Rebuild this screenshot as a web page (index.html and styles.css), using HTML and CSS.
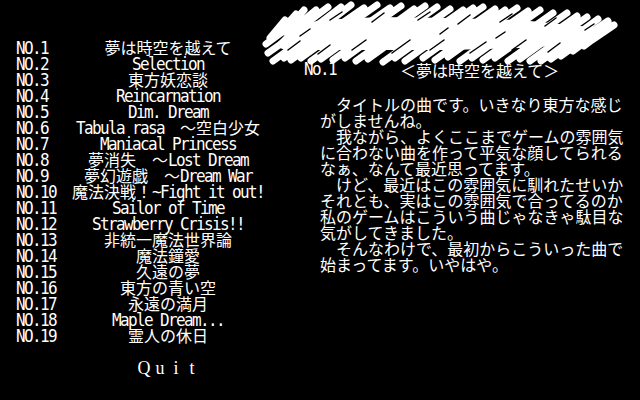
FILE: index.html
```html
<!DOCTYPE html>
<html lang="ja">
<head>
<meta charset="utf-8">
<title>Music Room</title>
<link rel="stylesheet" href="styles.css">
</head>
<body>
<div class="screen">
  <svg class="scribble" viewBox="0 0 640 70" width="640" height="70" aria-hidden="true">
    <polygon class="core" points="280,40 292,28 320,20 380,17 450,18 520,20 570,25 600,28 595,36 570,45 520,48 450,50 380,50 320,50 285,50 275,46"/>
    <path class="strokes" d="M270 38 L285 20 M278 34 L296 14 M285 32 L304 10 M292 30 L316 10 M300 28 L328 7 M315 27 L341 7 M325 25 L351 5 M338 26 L364 8 M350 24 L377 5 M364 26 L390 8 M374 25 L401 6 M388 28 L414 9 M398 25 L425 6 M410 26 L437 7 M423 28 L450 9 M436 29 L463 10 M446 27 L473 8 M456 26 L483 7 M468 28 L495 9 M478 29 L505 10 M490 27 L517 8 M501 30 L528 11 M513 29 L540 10 M526 32 L553 13 M540 32 L567 13 M550 35 L577 16 M560 36 L587 17 M572 38 L598 19 M582 39 L608 21 M592 40 L614 25
    M266 44 L285 30 M268 53 L292 36 M273 61 L298 43 M284 58 L309 40 M291 60 L316 42 M301 58 L326 40 M311 61 L336 43 M321 59 L346 41 M333 60 L358 42 M345 58 L370 40 M356 61 L381 43 M368 59 L393 41 M383 62 L408 44 M395 58 L420 40 M405 61 L430 43 M423 58 L448 40 M435 60 L460 42 M448 57 L473 39 M460 61 L485 43 M472 58 L497 40 M483 60 L508 42 M495 58 L520 40 M508 61 L533 43 M520 59 L545 41 M530 61 L555 43 M541 61 L566 43 M551 59 L576 41 M561 56 L586 38 M573 51 L596 34 M584 46 L604 31"/>
    <path class="gaps" d="M288 50 L300 41 M318 54 L330 45 M352 50 L366 40 M392 53 L410 40 M430 50 L444 40 M470 53 L486 42 M512 50 L526 40 M548 52 L560 43 M330 20 L342 12 M372 22 L384 13 M418 20 L430 12 M458 24 L470 15 M500 22 L512 14 M545 26 L556 18 M585 30 L594 24 M300 36 L310 29 M440 34 L448 28 M496 38 L505 32"/>
  </svg>

  <div class="menu">
    <ol class="list">
      <li class="row"><span class="no"><span class="h">NO.1</span></span><span class="title">夢は時空を越えて</span></li>
      <li class="row"><span class="no"><span class="h">NO.2</span></span><span class="title"><span class="h">Selection</span></span></li>
      <li class="row"><span class="no"><span class="h">NO.3</span></span><span class="title">東方妖恋談</span></li>
      <li class="row"><span class="no"><span class="h">NO.4</span></span><span class="title"><span class="h">Reincarnation</span></span></li>
      <li class="row"><span class="no"><span class="h">NO.5</span></span><span class="title"><span class="h">Dim. Dream</span></span></li>
      <li class="row"><span class="no"><span class="h">NO.6</span></span><span class="title"><span class="h">Tabula rasa</span>　～空白少女</span></li>
      <li class="row"><span class="no"><span class="h">NO.7</span></span><span class="title"><span class="h">Maniacal Princess</span></span></li>
      <li class="row"><span class="no"><span class="h">NO.8</span></span><span class="title">夢消失　～<span class="h">Lost Dream</span></span></li>
      <li class="row"><span class="no"><span class="h">NO.9</span></span><span class="title">夢幻遊戯　～<span class="h">Dream War</span></span></li>
      <li class="row"><span class="no"><span class="h">NO.10</span></span><span class="title">魔法決戦！<span class="h">~Fight it out!</span></span></li>
      <li class="row"><span class="no"><span class="h">NO.11</span></span><span class="title"><span class="h">Sailor of Time</span></span></li>
      <li class="row"><span class="no"><span class="h">NO.12</span></span><span class="title"><span class="h">Strawberry Crisis!!</span></span></li>
      <li class="row"><span class="no"><span class="h">NO.13</span></span><span class="title">非統一魔法世界論</span></li>
      <li class="row"><span class="no"><span class="h">NO.14</span></span><span class="title">魔法鐘愛</span></li>
      <li class="row"><span class="no"><span class="h">NO.15</span></span><span class="title">久遠の夢</span></li>
      <li class="row"><span class="no"><span class="h">NO.16</span></span><span class="title">東方の青い空</span></li>
      <li class="row"><span class="no"><span class="h">NO.17</span></span><span class="title">永遠の満月</span></li>
      <li class="row"><span class="no"><span class="h">NO.18</span></span><span class="title"><span class="h">Maple Dream...</span></span></li>
      <li class="row"><span class="no"><span class="h">NO.19</span></span><span class="title">霊人の休日</span></li>
    </ol>
    <div class="quit"><span>Q</span><span>u</span><span>i</span><span>t</span></div>
  </div>

  <div class="info">
    <div class="head"><span class="h">No.1</span><span class="name">＜夢は時空を越えて＞</span></div>
    <div class="comment">
      <div class="line">　タイトルの曲です。いきなり東方な感じ</div>
      <div class="line">がしませんね。</div>
      <div class="line">　我ながら、よくここまでゲームの雰囲気</div>
      <div class="line">に合わない曲を作って平気な顔してられる</div>
      <div class="line">なぁ、なんて最近思ってます。</div>
      <div class="line">　けど、最近はこの雰囲気に馴れたせいか</div>
      <div class="line">それとも、実はこの雰囲気で合ってるのか</div>
      <div class="line">私のゲームはこういう曲じゃなきゃ駄目な</div>
      <div class="line">気がしてきました。</div>
      <div class="line">　そんなわけで、最初からこういった曲で</div>
      <div class="line">始まってます。いやはや。</div>
    </div>
  </div>
</div>
</body>
</html>
```

FILE: styles.css
```css
html, body {
  margin: 0;
  padding: 0;
  background: #000;
}

body {
  color: #fff;
  font-family: "Noto Sans CJK JP", sans-serif;
  font-size: 16px;
  line-height: 16px;
}

.screen {
  position: relative;
  display: flex;
  width: 640px;
  height: 400px;
  overflow: hidden;
  background: #000;
}

.scribble {
  position: absolute;
  left: 0;
  top: 0;
}

.scribble .core {
  fill: #fff;
}

.scribble .strokes {
  fill: none;
  stroke: #fff;
  stroke-width: 7;
  stroke-linecap: round;
}

.scribble .gaps {
  fill: none;
  stroke: #000;
  stroke-width: 1.5;
  stroke-linecap: round;
}

.h {
  display: inline-block;
  font-family: "DejaVu Sans Mono", monospace;
  letter-spacing: -1.63px;
  transform: scaleY(1.1);
  transform-origin: 50% 84%;
}

.menu {
  width: 304px;
  margin-left: 16px;
  padding-top: 39px;
  flex: none;
}

.list {
  list-style: none;
  margin: 0;
  padding: 0;
}

.row {
  display: grid;
  grid-template-columns: 1fr;
  grid-template-rows: 16px;
  height: 16px;
  white-space: pre;
}

.row > .no,
.row > .title {
  grid-area: 1 / 1;
}

.no {
  justify-self: start;
}

.title {
  justify-self: center;
}

.quit {
  display: flex;
  justify-content: center;
  margin-top: 17px;
  height: 16px;
  font-family: "Liberation Serif", serif;
  font-size: 18px;
}

.quit span {
  display: block;
  width: 16px;
  text-align: center;
}

.info {
  flex: 1;
  padding-top: 62px;
}

.head {
  display: flex;
  height: 16px;
  margin-left: -16px;
  white-space: pre;
}

.head .name {
  margin-left: 64px;
}

.comment {
  margin-top: 18px;
}

.line {
  height: 16px;
  white-space: pre;
}
```
